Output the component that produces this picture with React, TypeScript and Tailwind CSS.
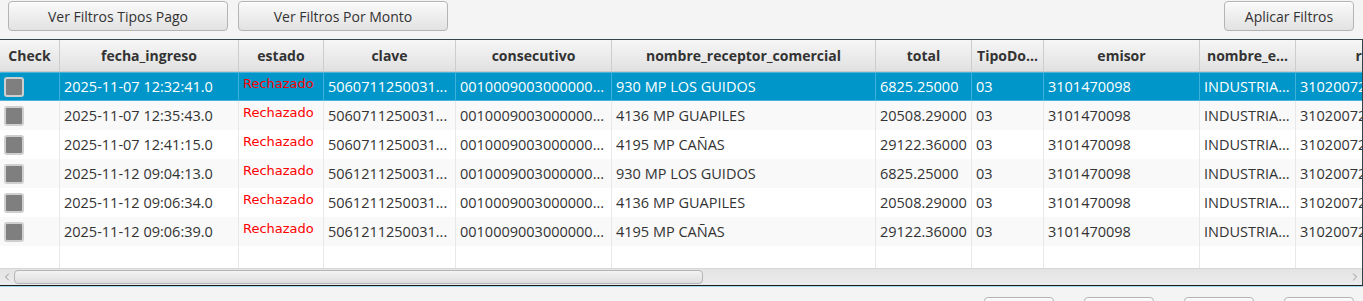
import { ChevronLeft, ChevronRight } from 'lucide-react'

interface Column {
  key: string
  title: string
  width: string
}

interface Row {
  fecha: string
  clave: string
  receptor: string
  total: string
}

const columns: Column[] = [
  { key: 'check', title: 'Check', width: 'w-[60px]' },
  { key: 'fecha', title: 'fecha_ingreso', width: 'w-[179px]' },
  { key: 'estado', title: 'estado', width: 'w-[85px]' },
  { key: 'clave', title: 'clave', width: 'w-[132px]' },
  { key: 'consecutivo', title: 'consecutivo', width: 'w-[156px]' },
  { key: 'receptor', title: 'nombre_receptor_comercial', width: 'w-[264px]' },
  { key: 'total', title: 'total', width: 'w-[96px]' },
  { key: 'tipo', title: 'TipoDo...', width: 'w-[72px]' },
  { key: 'emisor', title: 'emisor', width: 'w-[156px]' },
  { key: 'nombreEmisor', title: 'nombre_e...', width: 'w-[96px]' },
  { key: 'cedula', title: 'receptor', width: 'w-[180px]' },
]

const rows: Row[] = [
  { fecha: '2025-11-07 12:32:41.0', clave: '5060711250031...', receptor: '930 MP LOS GUIDOS', total: '6825.25000' },
  { fecha: '2025-11-07 12:35:43.0', clave: '5060711250031...', receptor: '4136 MP GUAPILES', total: '20508.29000' },
  { fecha: '2025-11-07 12:41:15.0', clave: '5060711250031...', receptor: '4195 MP CAÑAS', total: '29122.36000' },
  { fecha: '2025-11-12 09:04:13.0', clave: '5061211250031...', receptor: '930 MP LOS GUIDOS', total: '6825.25000' },
  { fecha: '2025-11-12 09:06:34.0', clave: '5061211250031...', receptor: '4136 MP GUAPILES', total: '20508.29000' },
  { fecha: '2025-11-12 09:06:39.0', clave: '5061211250031...', receptor: '4195 MP CAÑAS', total: '29122.36000' },
]

const font = "font-['Open_Sans','Noto_Sans',sans-serif]"

function FxButton({ label, className }: { label: string; className: string }) {
  return (
    <button
      className={`flex h-[30px] shrink-0 items-center justify-center rounded-[4px] border border-[#b4b4b4] bg-linear-to-b from-[#fafafa] to-[#e2e2e2] text-[14px] text-[#333] shadow-[inset_0_1px_0_#ffffff] ${className}`}
    >
      {label}
    </button>
  )
}

function CheckBox() {
  return (
    <div className="h-5 w-5 rounded-[3px] bg-[#cfcfcf] p-[2px]">
      <div className="h-full w-full rounded-[1px] bg-[#7f7f7f]" />
    </div>
  )
}

function cellsFor(row: Row): Record<string, string> {
  return {
    fecha: row.fecha,
    clave: row.clave,
    consecutivo: '0010009003000000...',
    receptor: row.receptor,
    total: row.total,
    tipo: '03',
    emisor: '3101470098',
    nombreEmisor: 'INDUSTRIA...',
    cedula: '31020072...',
  }
}

function DataRow({ row, index }: { row: Row; index: number }) {
  const selected = index === 0
  const values = cellsFor(row)
  const rowBg = selected ? 'bg-[#0096c9]' : index % 2 === 1 ? 'bg-[#f9f9f9]' : 'bg-white'
  const textColor = selected ? 'text-white' : 'text-[#333]'
  const divider = selected ? 'border-[#3fb0da]' : 'border-[#e8e8e8]'

  return (
    <div className={`flex h-[29px] ${rowBg} ${textColor} ${selected ? 'border-y border-[#4ab4dc]' : ''}`}>
      {columns.map((col) => (
        <div
          key={col.key}
          className={`flex h-full shrink-0 items-center overflow-hidden whitespace-nowrap border-r ${divider} ${col.width}`}
        >
          {col.key === 'check' ? (
            <div className="pl-1">
              <CheckBox />
            </div>
          ) : col.key === 'estado' ? (
            <span className="-mt-[5px] pl-1 font-['DejaVu_Sans',sans-serif] text-[13px] text-[#ff0000]">
              Rechazado
            </span>
          ) : (
            <span className="pl-1 text-[14.5px]">{values[col.key]}</span>
          )}
        </div>
      ))}
    </div>
  )
}

export default function App() {
  return (
    <div className={`flex h-[301px] w-[1363px] flex-col overflow-hidden bg-[#f4f4f4] ${font}`}>
      {/* Toolbar */}
      <div className="flex h-[39px] shrink-0 items-start pt-px">
        <FxButton label="Ver Filtros Tipos Pago" className="ml-2 w-[220px]" />
        <FxButton label="Ver Filtros Por Monto" className="ml-[10px] w-[210px]" />
        <div className="flex-1" />
        <FxButton label="Aplicar Filtros" className="mr-[9px] w-[130px]" />
      </div>

      {/* Table */}
      <div className="shrink-0 overflow-hidden border-t border-r border-[#34434a] border-b-[#1c1c1c] border-b bg-white">
        <div className="flex h-[32px] border-b border-[#c9c9c9] bg-linear-to-b from-[#f6f6f6] to-[#e1e1e1]">
          {columns.map((col) => (
            <div
              key={col.key}
              className={`flex h-full shrink-0 items-center justify-center overflow-hidden whitespace-nowrap border-r border-[#cdcdcd] text-[14px] font-bold text-[#333] ${col.width}`}
            >
              {col.title}
            </div>
          ))}
        </div>

        {rows.map((row, i) => (
          <DataRow key={i} row={row} index={i} />
        ))}

        <div className="flex h-[22px]">
          {columns.map((col) => (
            <div key={col.key} className={`h-full shrink-0 border-r border-[#e8e8e8] ${col.width}`} />
          ))}
        </div>

        {/* Horizontal scrollbar */}
        <div className="flex h-[17px] items-center border-t border-[#d6d6d6] bg-linear-to-b from-[#e4e4e4] to-[#ececec]">
          <div className="flex w-[14px] justify-center text-[#7a7a7a]">
            <ChevronLeft size={12} strokeWidth={1.5} />
          </div>
          <div className="h-[14px] w-[689px] rounded-[4px] border border-[#b5b5b5] bg-linear-to-b from-[#f3f3f3] to-[#dedede]" />
          <div className="flex-1" />
          <div className="flex w-[14px] justify-center text-[#7a7a7a]">
            <ChevronRight size={12} strokeWidth={1.5} />
          </div>
        </div>
      </div>
      <div className="h-px shrink-0 bg-[#a6d8ec]" />

      {/* Bottom buttons (partly visible) */}
      <div className="flex shrink-0 justify-end gap-[30px] pr-[9px] pt-[10px]">
        <FxButton label="" className="w-[70px]" />
        <FxButton label="" className="w-[70px]" />
        <FxButton label="" className="w-[70px]" />
        <FxButton label="" className="w-[70px]" />
      </div>
    </div>
  )
}
